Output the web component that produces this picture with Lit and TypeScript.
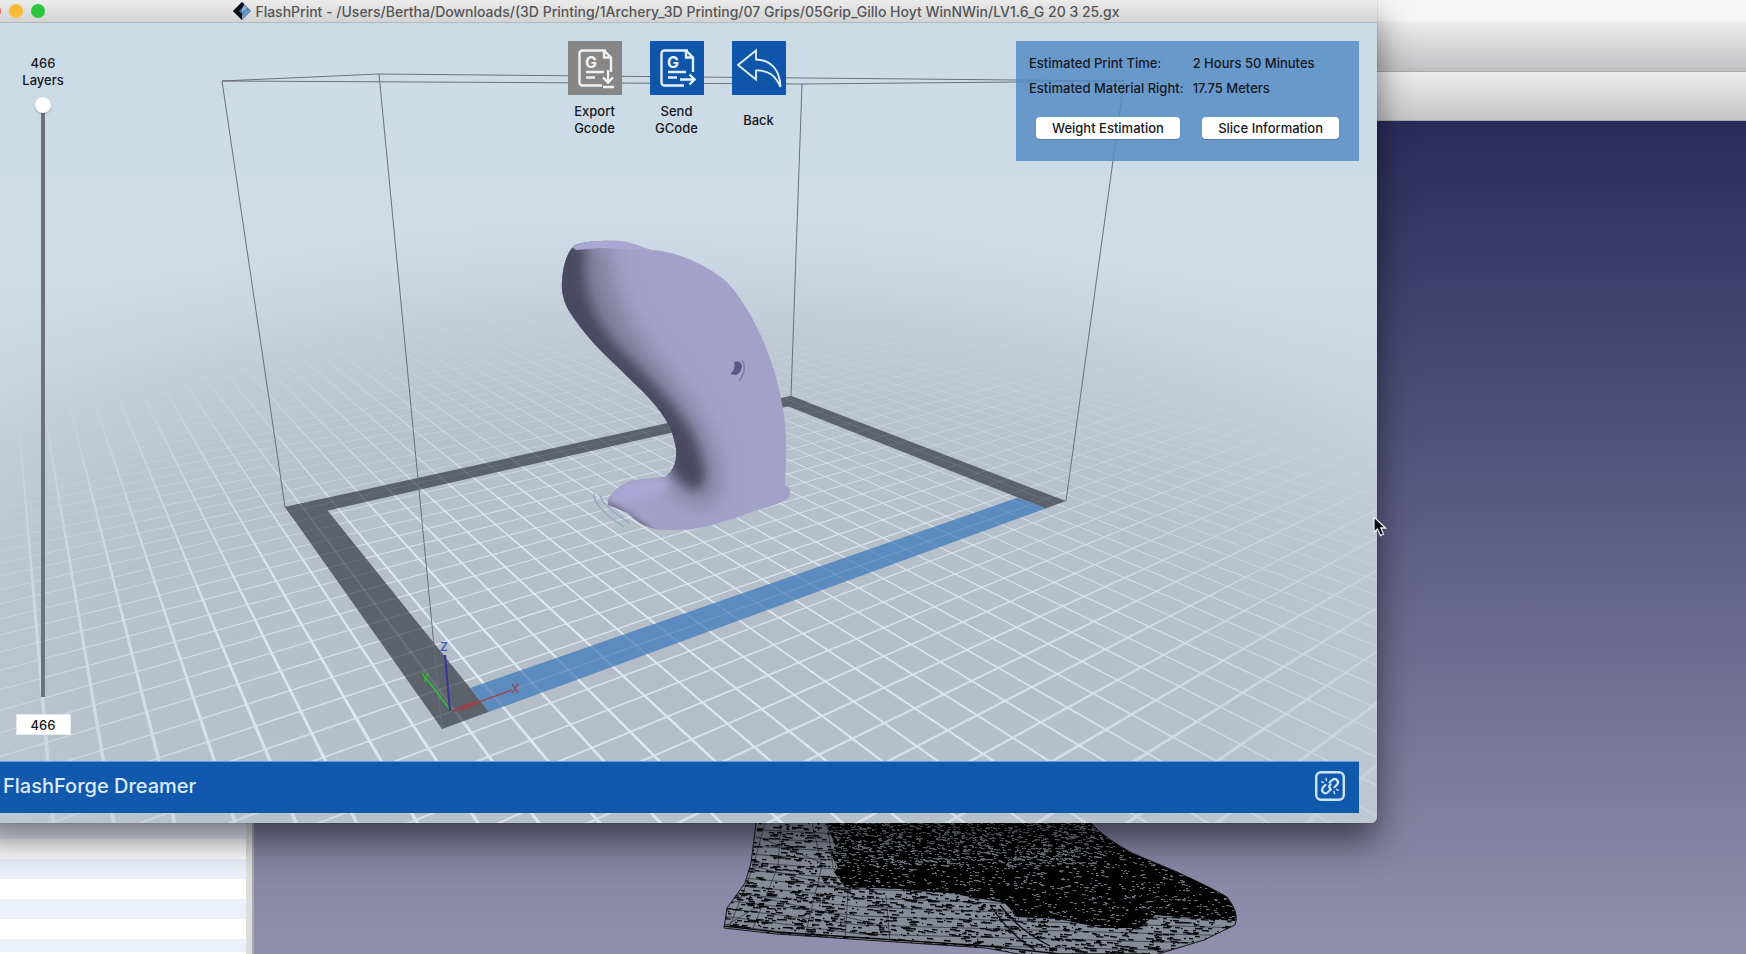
import { LitElement, html, svg, css } from "lit";
import { customElement, property, state } from "lit/decorators.js";

type Pt = [number, number];

/* ---------- build-plate projection (millimetres -> scene units) ---------- */

const HALF_X = 115;
const HALF_Y = 75;
const FRONT: Pt = [442, 706];
const RIGHT: Pt = [1066, 478];
const BACK: Pt = [791, 373];
const LEFT: Pt = [285, 484];

function homography(p0: Pt, p1: Pt, p2: Pt, p3: Pt) {
  const dx1 = p1[0] - p2[0], dx2 = p3[0] - p2[0], sx = p0[0] - p1[0] + p2[0] - p3[0];
  const dy1 = p1[1] - p2[1], dy2 = p3[1] - p2[1], sy = p0[1] - p1[1] + p2[1] - p3[1];
  const den = dx1 * dy2 - dx2 * dy1;
  const g = (sx * dy2 - dx2 * sy) / den;
  const h = (dx1 * sy - sx * dy1) / den;
  return {
    a: p1[0] - p0[0] + g * p1[0], b: p3[0] - p0[0] + h * p3[0], c: p0[0],
    d: p1[1] - p0[1] + g * p1[1], e: p3[1] - p0[1] + h * p3[1], f: p0[1],
    g, h,
  };
}
const H = homography(FRONT, RIGHT, BACK, LEFT);

function depth(x: number, y: number) {
  return H.g * ((x + HALF_X) / (2 * HALF_X)) + H.h * ((y + HALF_Y) / (2 * HALF_Y)) + 1;
}
function project(x: number, y: number): Pt {
  const u = (x + HALF_X) / (2 * HALF_X), v = (y + HALF_Y) / (2 * HALF_Y);
  const w = H.g * u + H.h * v + 1;
  return [(H.a * u + H.b * v + H.c) / w, (H.d * u + H.e * v + H.f) / w];
}
const pts = (list: Pt[]) => list.map(([x, y]) => `${x.toFixed(1)},${y.toFixed(1)}`).join(" ");
const quad = (x0: number, y0: number, x1: number, y1: number) =>
  pts([project(x0, y0), project(x1, y0), project(x1, y1), project(x0, y1)]);

/* Grid lines drawn as thin strips, cut where they would pass behind the eye.
   Each direction is its own path, so that crossings stay filled. */
function gridPath(at: (t: number, k: number) => Pt): string {
  const NEAR = 0.35, REACH = 900, T = 0.33;
  const out: string[] = [];
  for (let k = -800; k <= 800; k += 10) {
    let lo = -REACH, hi = REACH;
    while (lo < hi && depth(...at(lo, k)) < NEAR) lo += 5;
    while (hi > lo && depth(...at(hi, k)) < NEAR) hi -= 5;
    if (hi - lo < 10) continue;
    const c = [at(lo, k - T), at(hi, k - T), at(hi, k + T), at(lo, k + T)].map((p) => project(...p));
    out.push("M" + c.map((p) => `${p[0].toFixed(1)} ${p[1].toFixed(1)}`).join("L") + "Z");
  }
  return out.join("");
}
const GRID_Y = gridPath((t, k) => [k, t]);
const GRID_X = gridPath((t, k) => [t, k]);

/* ---------- mesh texture for the model in the rear window ---------- */

function random(seed: number) {
  return () => {
    seed = (seed * 1664525 + 1013904223) >>> 0;
    return seed / 4294967296;
  };
}
function dashes(seed: number, count: number, x0: number, x1: number, y0: number, y1: number, len: number, slope: number) {
  const r = random(seed);
  let d = "";
  for (let i = 0; i < count; i++) {
    const x = x0 + r() * (x1 - x0);
    const y = Math.round(y0 + r() * (y1 - y0)) + 0.5;
    const l = 1 + r() * len;
    d += `M${x.toFixed(0)} ${y}l${l.toFixed(1)} ${(l * slope).toFixed(1)}`;
  }
  return d;
}
const MESH_DARK = dashes(7, 3000, 722, 1240, 820, 954, 7, 0.08);
const MESH_LIGHT = dashes(21, 1700, 826, 1240, 820, 930, 3, 0.1) + dashes(33, 1000, 826, 1100, 820, 866, 4, 0.1);
const MESH_ROWS = Array.from({ length: 13 }, (_, i) => {
  const y = 828 + i * 8;
  return `M722 ${y}L860 ${y + 7 + i}L1240 ${y + 28}`;
}).join("");
const MESH_RIBS = "M765 823L752 870L729 928M781 823L778 866L752 931M812 823L822 866L805 936M827 823L833 867L848 892L845 941M886 895L890 944M756 836L820 862M752 866L846 889M742 893L880 925M727 925L760 905";

@customElement("mesh-window")
export class MeshWindow extends LitElement {
  static styles = css`
    :host { display: flex; flex-direction: column; min-width: 0; }
    .bar { flex: none; height: 71px; border-bottom: 1px solid #a9a9a9; background: linear-gradient(#f6f6f6 0 21px, #ececec 22px, #bfc0c2); }
    .bar.second { height: 48px; background: linear-gradient(#ececec, #c5c5c5); }
    .body { flex: 1; display: flex; min-height: 0; }
    .tree { flex: none; width: 246px; background: repeating-linear-gradient(#fff 0 20px, #ebf0fa 20px 40px) 0 -2px; }
    .splitter { flex: none; width: 6px; background: #dcdedd; border-right: 2px solid #a9aaae; }
    .view { flex: 1; min-width: 0; background: linear-gradient(#2b2b5a, #9290ae); }
    .view svg { display: block; width: 100%; height: 100%; }
    .hull { fill: #858b97; }
    .dense { fill: #020203; }
    .dark { stroke: #08080a; stroke-width: 1.3; fill: none; }
    .light { stroke: #767b85; stroke-width: 1; fill: none; }
    .ribs { stroke: #2b2c36; stroke-width: 0.7; fill: none; }
    .edge { stroke: #17171c; stroke-width: 1; fill: none; }
  `;
  render() {
    const hull = "M756 815V823L751 863L745 883L727 908L724 928L776 934L986 948L1040 958H1145L1204 940L1235 925Q1240 914 1227 897Q1212 888 1177 872L1132 853Q1104 838 1091 823V815Z";
    const dense = "M827 815L829 830L835 845L831 855L838 867L834 872L845 887L900 889L948 893L1005 903L1017 917L1060 919L1101 928H1139L1155 915L1235 921Q1240 914 1227 897Q1212 888 1177 872L1132 853Q1104 838 1091 823V815Z";
    return html`
      <div class="bar"></div>
      <div class="bar second"></div>
      <div class="body">
        <div class="tree"></div>
        <div class="splitter"></div>
        <div class="view">
          <svg viewBox="254 121 1492 833" preserveAspectRatio="xMinYMin slice" aria-hidden="true">
            <defs>
              <clipPath id="hull"><path d=${hull} /></clipPath>
              <clipPath id="dense"><path d=${dense} /></clipPath>
            </defs>
            <path class="hull" d=${hull} />
            <g clip-path="url(#hull)">
              <path class="ribs" d=${MESH_ROWS} />
              <path class="ribs" d=${MESH_RIBS} />
              <path class="dark" d=${MESH_DARK} />
              <path class="dark" d="M724 926L776 932L986 946L1060 954H1150M990 905Q1010 935 1035 950M1000 905Q1018 930 1050 946" />
            </g>
            <path class="dense" d=${dense} />
            <g clip-path="url(#dense)"><path class="light" d=${MESH_LIGHT} /></g>
            <path class="edge" d=${hull} />
          </svg>
        </div>
      </div>
    `;
  }
}

@customElement("print-scene")
export class PrintScene extends LitElement {
  static styles = css`
    :host { display: block; min-width: 0; min-height: 0; overflow: hidden; }
    svg { display: block; width: 100%; height: 100%; }
    .lines { fill: #dfe8f1; }
    .lines.cross { opacity: 0.85; }
    .frame { fill: #5b626b; }
    .front { fill: #5c8cbf; }
    .box { stroke: #69707b; stroke-width: 1; fill: none; }
    .over { fill: #fff; opacity: 0.1; }
    .axis { font: 600 12px Inter, "Liberation Sans", sans-serif; }
  `;
  render() {
    const S = 11.5, X = HALF_X, Y = HALF_Y;
    const body = "M574 223C578 219 600 217 621 218C632 219 640 224 652 227C672 228 702 238 727 259C745 279 763 310 776 354C785 388 787 410 786 442L785 462C791 464 792 472 787 476C778 482 755 488 735 495C715 501 699 507 678 507L660 507C645 505 636 498 628 490L608 482C606 474 616 464 632 457L665 454C673 448 677 440 676 426C673 400 655 380 634 360C612 338 592 322 573 294C564 282 561 270 562 258C563 243 567 229 574 223Z";
    return html`
      <svg viewBox="-24 0 1401 800" preserveAspectRatio="xMidYMid slice" role="img" aria-label="Sliced model on the build plate">
        <defs>
          <linearGradient id="sky" x1="0" y1="0" x2="0" y2="1">
            <stop offset="0" stop-color="#cbdbe6" /><stop offset=".3" stop-color="#cddce7" /><stop offset="1" stop-color="#c0ccd7" />
          </linearGradient>
          <radialGradient id="floor" gradientUnits="userSpaceOnUse" cx="0" cy="0" r="1" gradientTransform="translate(670 640) scale(1060 450)">
            <stop offset="0" stop-color="#b3bcc7" /><stop offset=".55" stop-color="#b7c1cc" />
            <stop offset=".75" stop-color="#bdc8d3" stop-opacity=".85" /><stop offset="1" stop-color="#c8d5e0" stop-opacity="0" />
          </radialGradient>
          <radialGradient id="fog" gradientUnits="userSpaceOnUse" cx="0" cy="0" r="1" gradientTransform="translate(670 640) scale(930 380)">
            <stop offset="0" stop-color="#fff" /><stop offset=".45" stop-color="#fff" stop-opacity=".9" />
            <stop offset=".72" stop-color="#fff" stop-opacity=".5" /><stop offset="1" stop-color="#fff" stop-opacity="0" />
          </radialGradient>
          <mask id="fade" maskUnits="userSpaceOnUse" x="-24" y="0" width="1401" height="800">
            <rect x="-24" width="1401" height="800" fill="url(#fog)" />
          </mask>
          <clipPath id="body"><path d=${body} /></clipPath>
          <clipPath id="plate"><polygon points=${quad(-X, -Y, X, Y)} /></clipPath>
          <filter id="soft" x="-40%" y="-40%" width="180%" height="180%"><feGaussianBlur stdDeviation="12" /></filter>
          <filter id="fine" x="-40%" y="-40%" width="180%" height="180%"><feGaussianBlur stdDeviation="6" /></filter>
          <filter id="tiny" x="-40%" y="-40%" width="180%" height="180%"><feGaussianBlur stdDeviation="3" /></filter>
        </defs>
        <rect x="-24" width="1401" height="800" fill="url(#sky)" />
        <rect x="-24" width="1401" height="800" fill="url(#floor)" />
        <g mask="url(#fade)"><path class="lines" d=${GRID_Y} /><path class="lines cross" d=${GRID_X} /></g>
        <polygon class="frame" points=${quad(-X, -Y, -X + S, Y)} />
        <polygon class="frame" points=${quad(-X, Y - S, X, Y)} />
        <polygon class="frame" points=${quad(X - S, -Y, X, Y)} />
        <polygon class="front" points=${quad(-X + S, -Y, X - S, -Y + S)} />
        <g clip-path="url(#plate)"><path class="over" d=${GRID_Y} /><path class="over" d=${GRID_X} /></g>
        <path class="box" d="M222 58L379 51L1124 58L802 61Z M222 58L285 484 M379 51L442 706 M802 61L791 373 M1124 58L1066 478" />

        <g>
          <path d="M594 471Q593 484 624 504M600 473Q606 486 630 500" fill="none" stroke="#93abc0" stroke-width="1.5" />
          <path d=${body} fill="#a3a1c8" />
          <g clip-path="url(#body)">
            <path filter="url(#soft)" fill="#7d7b98" d="M550 205L606 222C608 266 624 300 654 336C690 380 718 420 718 462C714 496 680 482 668 452L630 370L550 300Z" />
            <path filter="url(#fine)" fill="#4a4960" d="M550 205L586 224C580 262 590 292 620 326C650 356 688 394 698 424C706 446 706 466 696 466C684 466 670 450 666 430L625 370L545 290Z" />
            <path fill="#aaa8d2" d="M572 224C578 217 600 216 622 218C634 219 640 224 650 227L600 225Q588 226 576 227Z" />
            <path filter="url(#tiny)" fill="#aaa8d4" d="M610 478C616 462 632 454 664 456C676 462 660 472 650 474Q630 476 610 480Z" />
            <path filter="url(#tiny)" fill="#55546e" d="M602 476Q634 492 660 514L624 508Z" />
          </g>
          <path fill="#5b5989" d="M734 339Q741 337 742 343Q741 350 736 352L730 351Q736 347 734 339Z" />
          <path d="M742 337Q748 346 739 358" fill="none" stroke="#7b79a3" stroke-width="1.3" />
        </g>

        <g>
          <path d="M451 688L426 655" stroke="#35b53c" stroke-width="2" />
          <path d="M450 688L445 632" stroke="#3a3494" stroke-width="2" />
          <path d="M451 689L512 667" stroke="#a0474f" stroke-width="1.5" />
          <path d="M451 689L462 682L478 677L479 681L464 687Z" fill="#8f4850" />
          <text class="axis" x="440" y="628" fill="#3f5fc4">Z</text>
          <text class="axis" x="421" y="659" fill="#35b53c">Y</text>
          <text class="axis" x="511" y="670" fill="#8d4f60">X</text>
        </g>
      </svg>
    `;
  }
}

const page = svg`
  <path d="M38 9.500H14.500a3 3 0 0 0-3 3V41.500a3 3 0 0 0 3 3H34" />
  <path d="M36 9.500L43 16.500V31" /><path d="M36 10V16.500H42.500" />
  <path d="M18 31H36M18 36.500H27" />`;

@customElement("tool-button")
export class ToolButton extends LitElement {
  @property() label = "";
  @property() icon = "";
  @property({ type: Boolean }) muted = false;
  static styles = css`
    :host { display: block; width: 54px; }
    button { all: unset; display: flex; flex-direction: column; align-items: center; gap: 8px; width: 100%; cursor: default; }
    .tile { display: block; width: 54px; height: 54px; background: #0f56aa; }
    .tile.muted { background: #868686; }
    svg { display: block; width: 54px; height: 54px; fill: none; stroke: #e4f2fb; stroke-width: 2.4; }
    .muted svg { stroke: #f1f1f1; }
    .g { font: 700 16px Inter, "Liberation Sans", sans-serif; fill: #e4f2fb; stroke: none; }
    .muted .g { fill: #f1f1f1; }
    .label { display: flex; align-items: center; height: 34px; font: 500 13px/17px Inter, "Liberation Sans", sans-serif; color: #16181d; text-align: center; white-space: pre-line; }
  `;
  private glyph() {
    if (this.icon === "back")
      return svg`<path stroke-width="1.8" d="M6 24L24 9.500V18.500C40 19 48 30 48.500 46C43 34 36 29 24 29.500V38.500Z" />`;
    return svg`${page}<text class="g" x="17" y="27">G</text>${this.icon === "export"
      ? svg`<path d="M40 29V41M35 36.500L40 41.500L45 36.500M35 46H46" />`
      : svg`<path d="M30 38.500H44M39.500 33.500L44.500 38.500L39.500 43.500" />`}`;
  }
  render() {
    return html`<button type="button">
      <span class="tile ${this.muted ? "muted" : ""}"><svg viewBox="0 0 54 54" aria-hidden="true">${this.glyph()}</svg></span>
      <span class="label">${this.label}</span>
    </button>`;
  }
}

@customElement("app-root")
export class AppRoot extends LitElement {
  @state() private layer = 466;
  private readonly layers = 466;

  static styles = css`
    :host { display: block; position: relative; height: 100vh; overflow: hidden; font: 500 13px/17px Inter, "Liberation Sans", sans-serif; color: #16181d; }
    mesh-window { height: 100%; }
    .window { position: absolute; inset: 0 369px 131px -24px; display: flex; flex-direction: column; border-radius: 0 0 6px 6px; box-shadow: 0 0 1px rgba(0, 0, 0, 0.6), 0 18px 34px rgba(0, 0, 0, 0.5); overflow: clip; }
    .titlebar { flex: none; display: grid; grid-template-columns: 1fr auto 1fr; align-items: center; height: 22px; padding: 0 11px; background: linear-gradient(#ebebeb, #d3d3d3); border-bottom: 1px solid #b5b9bc; }
    .lights { display: flex; gap: 8px; }
    .light { all: unset; width: 14px; height: 14px; border-radius: 50%; }
    .red { background: #f25f57; }
    .yellow { background: #f8bb33; }
    .green { background: #29c73f; }
    .title { display: flex; align-items: center; gap: 4px; margin: 0; font-size: 14px; font-weight: 500; color: #555557; white-space: nowrap; }
    .title svg { width: 18px; height: 18px; }
    .content { flex: 1; display: grid; min-height: 0; }
    print-scene, .overlay { grid-area: 1 / 1; }
    .overlay { z-index: 1; display: grid; grid-template-columns: 1fr auto 1fr; grid-template-rows: 1fr auto; row-gap: 26px; padding: 18px 18px 10px; min-height: 0; }
    .layers { display: flex; flex-direction: column; align-items: center; width: 98px; padding-top: 14px; min-height: 0; }
    .layers label { text-align: center; width: 50px; }
    .slider { flex: 1; min-height: 0; width: 16px; margin: 8px 0 17px; appearance: none; writing-mode: vertical-lr; direction: rtl; background: linear-gradient(#6e7180, #6e7180) center / 4px 100% no-repeat; }
    .slider::-webkit-slider-thumb { appearance: none; width: 16px; height: 16px; border-radius: 50%; background: #fff; box-shadow: 0 1px 2px rgba(0, 0, 0, 0.25); }
    .value { box-sizing: border-box; width: 55px; height: 21px; padding: 0; border: 1px solid #e6eaf0; background: #fff; font: inherit; color: inherit; text-align: center; }
    .tools { display: flex; gap: 28px; align-items: flex-start; }
    .info { justify-self: end; align-self: start; box-sizing: border-box; width: 343px; height: 120px; padding: 14px 20px 0 13px; background: rgba(87, 141, 197, 0.85); }
    dl { display: grid; grid-template-columns: auto 1fr; gap: 8px 9px; margin: 0; }
    dt, dd { margin: 0; white-space: nowrap; }
    .actions { display: flex; justify-content: space-between; margin-top: 20px; padding-left: 7px; }
    .action { height: 22px; padding: 0 16px; border: 0; border-radius: 4px; background: #fff; box-shadow: 0 1px 1px rgba(0, 0, 0, 0.2); font: inherit; color: inherit; white-space: nowrap; }
    .status { grid-column: 1 / -1; display: flex; align-items: center; justify-content: space-between; height: 52px; padding: 0 14px 4px 9px; background: #1159ad; border-top: 1px solid #5fa0d8; box-sizing: border-box; }
    .printer { font-size: 20px; line-height: 28px; font-weight: 500; color: #dcebf9; }
    .link { all: unset; width: 30px; height: 30px; }
    .link svg, .pointer { display: block; }
    .pointer { position: absolute; right: 359px; top: 516px; width: 14px; height: 21px; }
  `;

  private onLayer(e: Event) {
    this.layer = Number((e.target as HTMLInputElement).value);
  }

  render() {
    return html`
      <mesh-window></mesh-window>
      <main class="window">
        <header class="titlebar">
          <div class="lights">
            <button class="light red" aria-label="Close"></button>
            <button class="light yellow" aria-label="Minimize"></button>
            <button class="light green" aria-label="Zoom"></button>
          </div>
          <h1 class="title">
            <svg viewBox="0 0 18 18" aria-hidden="true"><path d="M9 0L18 9L9 18L0 9Z" fill="#3d6fa5" /><path d="M9 0L0 9L9 18V12L6 9L11 4V2Z" fill="#0c0f18" /><path d="M11 3L14 6L9 11V7Z" fill="#8fb4d9" /><path d="M13 7L18 9L9 18V13Z" fill="#6e94bb" /></svg>
            <span>FlashPrint - /Users/Bertha/Downloads/(3D Printing/1Archery_3D Printing/07 Grips/05Grip_Gillo Hoyt WinNWin/LV1.6_G 20 3 25.gx</span>
          </h1>
          <span></span>
        </header>
        <div class="content">
          <print-scene></print-scene>
          <div class="overlay">
            <section class="layers">
              <label for="layer">${this.layers} Layers</label>
              <input id="layer" class="slider" type="range" min="1" max=${this.layers} .value=${String(this.layer)} @input=${this.onLayer} />
              <input class="value" type="text" aria-label="Current layer" .value=${String(this.layer)} @change=${this.onLayer} />
            </section>
            <nav class="tools">
              <tool-button muted icon="export" .label=${"Export\nGcode"}></tool-button>
              <tool-button icon="send" .label=${"Send\nGCode"}></tool-button>
              <tool-button icon="back" .label=${"Back"}></tool-button>
            </nav>
            <section class="info">
              <dl>
                <dt>Estimated Print Time:</dt><dd>2 Hours 50 Minutes</dd>
                <dt>Estimated Material Right:</dt><dd>17.75 Meters</dd>
              </dl>
              <div class="actions">
                <button class="action" type="button">Weight Estimation</button>
                <button class="action" type="button">Slice Information</button>
              </div>
            </section>
            <footer class="status">
              <span class="printer">FlashForge Dreamer</span>
              <button class="link" type="button" aria-label="Connection">
                <svg width="30" height="30" viewBox="0 0 30 30" fill="none" stroke="#cfe6f8" stroke-width="2.400" stroke-linecap="round">
                  <rect x="1.200" y="1.200" width="27.600" height="27.600" rx="5" />
                  <path stroke-width="2.200" d="M14.500 11.500L17.500 8.800C20.500 6.500 24.500 10 22.300 13.200L19.500 16.200" />
                  <path stroke-width="2.200" d="M10.500 13.800L7.800 16.800C5.500 20 9.500 23.800 12.500 21.500L15.800 18.300L14 15.500L15.500 13.500" />
                  <path stroke-width="1.400" d="M8.500 11.500L6.800 10.800M11.500 9.500L11 7.500M19 20.500L19.500 22.500M21.500 18.500L23.200 19.200" />
                </svg>
              </button>
            </footer>
          </div>
        </div>
      </main>
      <svg class="pointer" viewBox="0 0 14 21" aria-hidden="true"><path d="M1 1V16L4.500 13L7.500 19.500L10.500 18L7.800 12H12.500Z" fill="#0b0b0e" stroke="#eceaf6" stroke-width="1.300" /></svg>
    `;
  }
}
